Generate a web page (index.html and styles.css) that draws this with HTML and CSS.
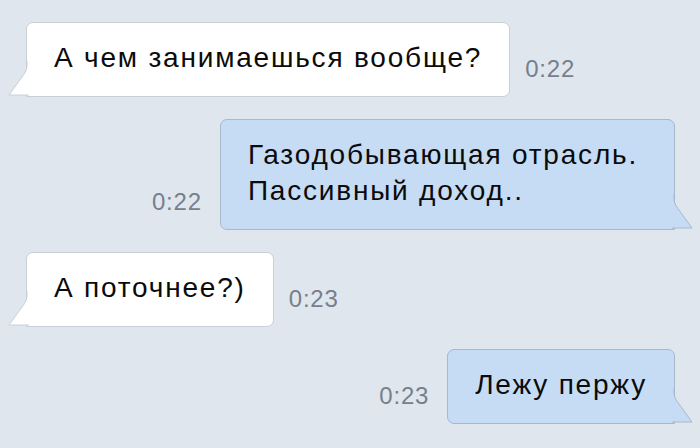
FILE: index.html
```html
<!DOCTYPE html>
<html lang="ru">
<head>
    <meta charset="UTF-8">
    <meta name="viewport" content="width=device-width, initial-scale=1.0">
    <title>Диалог</title>
    <link rel="stylesheet" href="styles.css">
</head>
<body>
    <main class="chat">
        <div class="msg msg-in">
            <div class="bubble">
                А чем занимаешься вообще?
                <svg class="tail" width="22" height="36" viewBox="0 0 22 36"><path d="M20 0 V3 C20 8 19 11 15 16 L2 34 H22" /></svg>
            </div>
            <span class="time">0:22</span>
        </div>

        <div class="msg msg-out">
            <span class="time">0:22</span>
            <div class="bubble bubble-wide">
                Газодобывающая отрасль.<br>Пассивный доход..
                <svg class="tail" width="22" height="36" viewBox="0 0 22 36"><path d="M2 0 V3 C2 8 3 11 7 16 L20 34 H0" /></svg>
            </div>
        </div>

        <div class="msg msg-in">
            <div class="bubble">
                А поточнее?)
                <svg class="tail" width="22" height="36" viewBox="0 0 22 36"><path d="M20 0 V3 C20 8 19 11 15 16 L2 34 H22" /></svg>
            </div>
            <span class="time">0:23</span>
        </div>

        <div class="msg msg-out">
            <span class="time">0:23</span>
            <div class="bubble">
                Лежу пержу
                <svg class="tail" width="22" height="36" viewBox="0 0 22 36"><path d="M2 0 V3 C2 8 3 11 7 16 L20 34 H0" /></svg>
            </div>
        </div>
    </main>
</body>
</html>
```

FILE: styles.css
```css
body {
    margin: 0;
    padding: 0;
    background-color: #e0e6ee;
    font-family: "Liberation Sans", Arial, sans-serif;
}
.chat {
    display: flex;
    flex-direction: column;
    gap: 22px;
    padding: 22px 0 24px;
}
.msg {
    display: flex;
    align-items: flex-end;
}
.msg-in {
    padding-left: 26px;
}
.msg-out {
    justify-content: flex-end;
    padding-right: 25px;
}
.bubble {
    position: relative;
    padding: 17px 27px 20px 27px;
    font-size: 28px;
    line-height: 36px;
    letter-spacing: 1.8px;
    color: #0b0b0b;
    border-radius: 7px;
}
.msg-in .bubble {
    background: #fff;
    border: 1px solid #c8cfd8;
    border-bottom-left-radius: 0;
}
.msg-out .bubble {
    background: #c6dcf4;
    border: 1px solid #a6b8cc;
    border-bottom-right-radius: 0;
}
.bubble-wide {
    padding-right: 36px;
}
.tail {
    position: absolute;
    bottom: -1px;
}
.msg-in .tail {
    left: -20px;
}
.msg-out .tail {
    right: -20px;
}
.msg-in .tail path {
    fill: #fff;
    stroke: #c8cfd8;
    stroke-width: 1;
}
.msg-out .tail path {
    fill: #c6dcf4;
    stroke: #a6b8cc;
    stroke-width: 1;
}
.time {
    font-size: 24px;
    line-height: 24px;
    letter-spacing: 0.8px;
    color: #76808c;
    margin-bottom: 16px;
}
.msg-in .time {
    margin-left: 15px;
}
.msg-out .time {
    margin-right: 18px;
}
```
